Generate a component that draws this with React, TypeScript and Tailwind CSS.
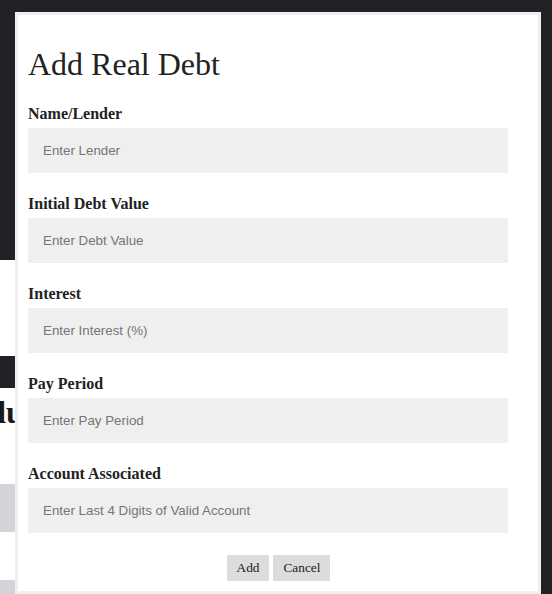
import { useState } from 'react'

const fields = [
  { label: 'Name/Lender', placeholder: 'Enter Lender' },
  { label: 'Initial Debt Value', placeholder: 'Enter Debt Value' },
  { label: 'Interest', placeholder: 'Enter Interest (%)' },
  { label: 'Pay Period', placeholder: 'Enter Pay Period' },
  { label: 'Account Associated', placeholder: 'Enter Last 4 Digits of Valid Account' },
]

function BackgroundPage() {
  return (
    <div className="w-[500px] pt-[260px] font-['Liberation_Serif',serif]">
      <div className="h-[96px] bg-white" />
      <div className="h-[32px] bg-[#212226]" />
      <div className="h-[96px] bg-white pt-[6px]">
        <h2 className="ml-[-39px] text-[32px] font-bold leading-[37px] text-[#1a1a1a]">Value</h2>
      </div>
      <div className="h-[48px] bg-[#d3d4d8]" />
      <div className="h-[48px] bg-white" />
      <div className="h-[40px] bg-[#d3d4d8]" />
    </div>
  )
}

export default function App() {
  const [values, setValues] = useState<string[]>(fields.map(() => ''))

  return (
    <div className="relative h-[594px] w-[552px] overflow-hidden bg-[#212226]">
      <BackgroundPage />

      {/* Modal */}
      <div className="absolute left-[15px] top-[12px] h-[582px] w-[526px] border-[3px] border-[#efefef] bg-white px-[10px] pt-[31px] font-['Liberation_Serif',serif] text-[#222]">
        <h1 className="mb-[21.5px] text-[32px] font-normal leading-[37px]">Add Real Debt</h1>
        {fields.map((f, i) => (
          <div key={f.label}>
            <label className="mb-[5.5px] block text-[16px] font-bold leading-[18px]">{f.label}</label>
            <input
              value={values[i]}
              onChange={(e) => {
                const next = [...values]
                next[i] = e.target.value
                setValues(next)
              }}
              placeholder={f.placeholder}
              className="mb-[21.5px] block h-[45px] w-[480px] bg-[#efefef] px-[15px] font-['Liberation_Sans',Arial,sans-serif] text-[13.33px] text-[#222] outline-none placeholder:text-[#757575]"
            />
          </div>
        ))}
        <div className="flex justify-center gap-[4px] pl-[1px]">
          <button className="h-[26px] bg-[#dcdcdc] px-[10px] text-[13.33px] text-[#1a1a1a]">Add</button>
          <button className="h-[26px] bg-[#dcdcdc] px-[10px] text-[13.33px] text-[#1a1a1a]">Cancel</button>
        </div>
      </div>
    </div>
  )
}
